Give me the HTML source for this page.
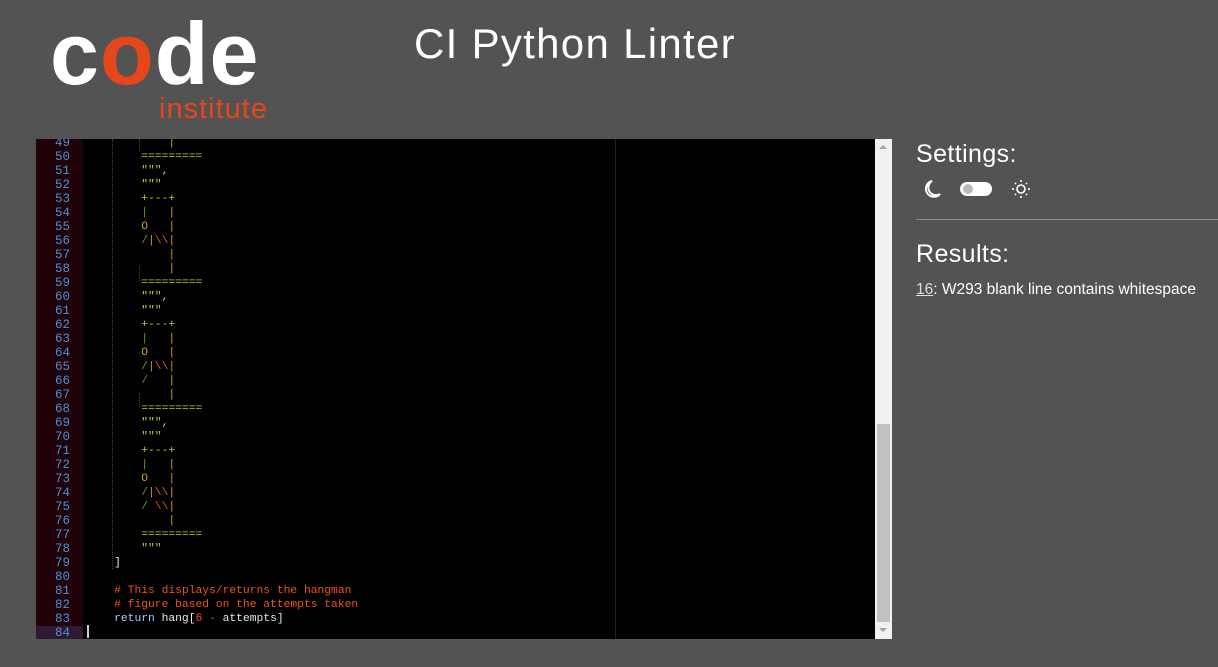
<!DOCTYPE html>
<html><head><meta charset="utf-8"><style>
*{margin:0;padding:0;box-sizing:border-box}
body{width:1218px;height:667px;background:#535353;position:relative;overflow:hidden;font-family:"Liberation Sans",sans-serif}
.logo{position:absolute;left:50px;top:10px;color:#fff;font-weight:bold;font-size:88px;letter-spacing:1px;line-height:1}
.logo .o{color:#e5461a}
.inst{position:absolute;left:159px;top:95px;color:#e5461a;font-size:29px;letter-spacing:1px;line-height:1}
h1{position:absolute;left:414px;top:23px;font-weight:normal;color:#fff;font-size:42px;letter-spacing:1.3px;line-height:1}
#ed{position:absolute;left:36px;top:139px;width:856px;height:500px;background:#000;overflow:hidden}
#gut{position:absolute;left:0;top:0;width:47px;height:500px;background:#1f0308}
.ln{position:absolute;left:0;width:34px;text-align:right;color:#4f8ed6;font:12.5px "Liberation Mono",monospace;height:14px;line-height:14px}
.cl{position:absolute;left:51px;white-space:pre;font:11.3px "Liberation Mono",monospace;height:14px;line-height:14px;color:#ddd}
.s{color:#bcc83a}.g{color:#56a12a}.y{color:#c9a21c}.r{color:#f0521c}.w{color:#e8e8e8}.b{color:#9fd3ff}
.guide{position:absolute;width:0;border-left:1px dotted #5a3a3a}
#pm{position:absolute;left:579px;top:0;width:1px;height:500px;background:#222}
#sb{position:absolute;left:839px;top:0;width:17px;height:500px;background:#f1f1f1}
#th{position:absolute;left:2px;top:285px;width:13px;height:198px;background:#c1c1c1}
.set{position:absolute;left:916px;color:#fff;font-size:25px;letter-spacing:0.4px;line-height:1}
hr{position:absolute;left:916px;top:219px;width:302px;border:0;border-top:1px solid #8a8a8a}
.res{position:absolute;left:916px;top:281px;color:#fff;font-size:15.5px}
.res u{color:#ddd}
</style></head><body>
<div class="logo">c<span class="o">o</span>de</div>
<div class="inst">institute</div>
<h1>CI Python Linter</h1>
<div id="ed">
<div id="gut"></div>
<div id="pm"></div>
<div id="lines"></div>
<div id="sb"><div style="position:absolute;left:4px;top:6px;border:4px solid transparent;border-bottom:4px solid #a3a3a3;border-top:0"></div><div id="th"></div><div style="position:absolute;left:4px;top:489px;border:4px solid transparent;border-top:4px solid #a3a3a3;border-bottom:0"></div></div>
</div>
<div class="set" style="top:142px">Settings:</div>
<svg style="position:absolute;left:920px;top:178px" width="130" height="24" viewBox="0 0 130 24">
<path d="M12 3 A8 8 0 1 0 20 16 A7 7 0 0 1 12 3 Z" fill="none" stroke="#fff" stroke-width="2"/>
<rect x="40" y="4" width="32" height="14" rx="7" fill="#fff"/><circle cx="48" cy="11" r="5" fill="#bbb"/>
<circle cx="101" cy="11" r="4" fill="none" stroke="#fff" stroke-width="1.6"/>
<g stroke="#fff" stroke-width="1.6"><line x1="101" y1="2" x2="101" y2="4"/><line x1="101" y1="18" x2="101" y2="20"/><line x1="92" y1="11" x2="94" y2="11"/><line x1="108" y1="11" x2="110" y2="11"/><line x1="95" y1="5" x2="96" y2="6"/><line x1="106" y1="16" x2="107" y2="17"/><line x1="95" y1="17" x2="96" y2="16"/><line x1="106" y1="6" x2="107" y2="5"/></g>
</svg>
<hr>
<div class="set" style="top:242px">Results:</div>
<div class="res"><u>16</u>: W293 blank line contains whitespace</div>
<script>
var E='<span class="s">=========</span>',T='<span class="s">"""</span><span class="b">,</span>',Q='<span class="s">"""</span>',P='<span class="s">+---+</span>',
B='<span class="g">|</span>   <span class="y">|</span>',O='<span class="y">O</span>   <span class="y">|</span>',
A='<span class="g">/</span><span class="y">|</span><span class="r">\\\\</span><span class="y">|</span>',
L='<span class="g">/</span>   <span class="y">|</span>',LL='<span class="g">/</span> <span class="r">\\\\</span><span class="y">|</span>',V='    <span class="y">|</span>';
var s8='        ',s4='    ';
var c={49:V,50:E,51:T,52:Q,53:P,54:B,55:O,56:A,57:V,58:V,59:E,60:T,61:Q,62:P,63:B,64:O,65:A,66:L,67:V,68:E,69:T,70:Q,71:P,72:B,73:O,74:A,75:LL,76:V,77:E,78:Q};
var h='';
for(var n=49;n<=84;n++){var t=-3+(n-49)*14;
if(n==84)h+='<div style="position:absolute;left:0;top:'+t+'px;width:47px;height:14px;background:#2e1a33"></div>';
h+='<div class="ln" style="top:'+t+'px">'+n+'</div>';
var x='';
if(c[n])x=s8+c[n];
else if(n==79)x=s4+'<span class="w">]</span>';
else if(n==81)x=s4+'<span class="r"># This displays/returns the hangman</span>';
else if(n==82)x=s4+'<span class="r"># figure based on the attempts taken</span>';
else if(n==83)x=s4+'<span class="b">return</span> <span class="w">hang[</span><span class="r">6</span> <span class="r">-</span> <span class="w">attempts]</span>';
h+='<div class="cl" style="top:'+t+'px">'+x+'</div>';}
h+='<div class="guide" style="left:76px;top:0;height:430px"></div><div class="guide" style="left:103px;top:254px;height:14px"></div><div class="guide" style="left:103px;top:128px;height:14px"></div><div class="guide" style="left:103px;top:0;height:12px"></div>';
h+='<div style="position:absolute;left:51px;top:486px;width:2px;height:13px;background:#ccc"></div>';
document.getElementById('lines').innerHTML=h;
</script>
</body></html>
